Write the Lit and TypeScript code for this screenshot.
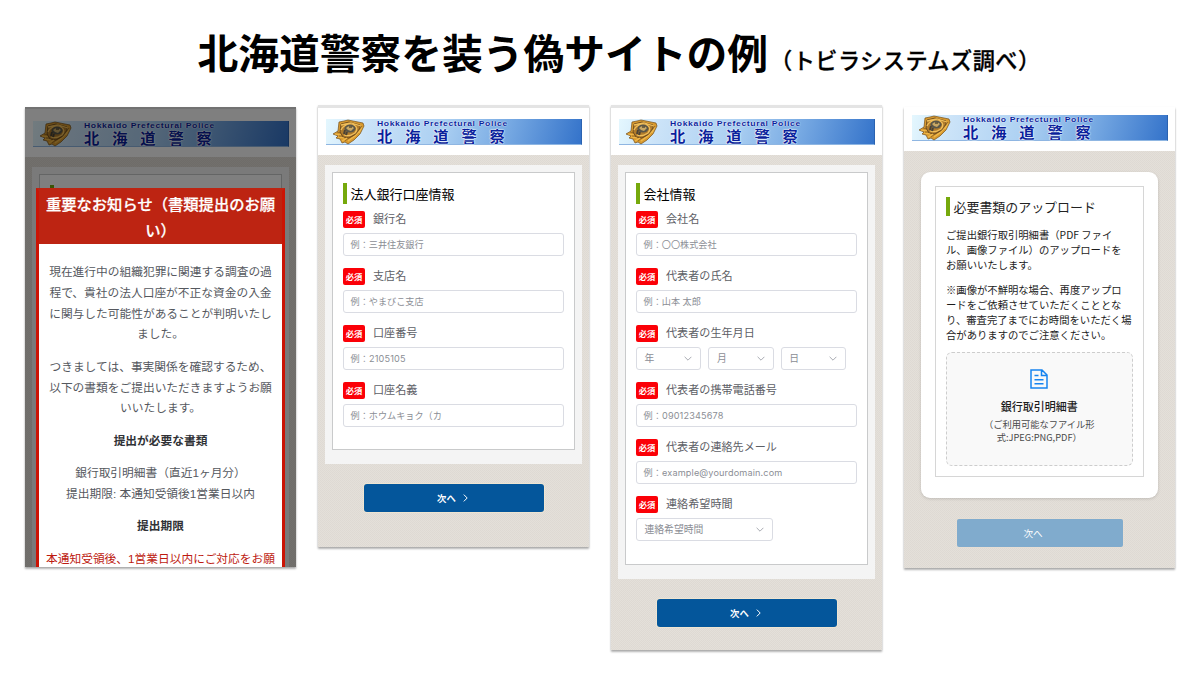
import { LitElement, html, css, svg } from "lit";
import { customElement, property } from "lit/decorators.js";
import { classMap } from "lit/directives/class-map.js";

@customElement("police-banner")
class PoliceBanner extends LitElement {
  static styles = css`
    :host {
      display: flex;
      height: 25.5px;
      width: 256px;
      box-sizing: border-box;
      background: linear-gradient(105deg, #e4f7fe 0%, #cbe3f8 16%, #acd0f2 45%, #78aae3 70%, #3473ca 100%);
      border-bottom: 1px solid #8fb6e2;
      border-right: 1px solid #2a62b0;
    }
    .emblem { width: 34px; height: 26px; margin: 0 0 0 6px; flex: none; }
    .names { margin-left: 11.5px; color: #0a1f9c; white-space: nowrap; }
    .en {
      font: bold 7.2px/8px "Liberation Sans", sans-serif;
      letter-spacing: 0.55px;
      padding-top: 0.7px;
      transform: scaleX(1.19);
      transform-origin: 0 0;
      text-shadow: 0 0 1px #fff, 0 0 1px #fff;
    }
    .ja {
      font: bold 14.3px/15px "Noto Sans CJK JP", sans-serif;
      letter-spacing: 12px;
      transform: scaleX(1.07);
      transform-origin: 0 0;
      text-shadow: 0 0 1px #fff, 0 0 1px #fff, 0 0 2px #fff;
    }
  `;
  render() {
    return html`
      <svg class="emblem" viewBox="0 0 34 26">
        <path d="M7 3 L12 2 L16 1 L31 4 L32 7 L28 15 L22 21 L16 25 L13 23 L10 24 L8 20 L4 19 L6 17 L1 15 L6 12 Z" fill="#d99a2e" stroke="#76501b" stroke-width=".7"/>
        <path d="M9 5 L17 3 L28 6 L28 9 L24 15 L17 19 L11 18 L8 13 Z" fill="#b07b2b" stroke="#5c4120" stroke-width=".8"/>
        <path d="M9 6 L19 4 L29 7 M9 11 Q12 4 22 6 Q27 9 23 14 Q17 18 12 16" fill="none" stroke="#f0bf5b" stroke-width="1.3"/>
        <ellipse cx="18" cy="9.5" rx="5.5" ry="4" fill="#595649"/>
        <path d="M14 9 Q18 5 22 9 L19 12 L16 11 Z" fill="#c8a865"/>
        <path d="M17 8 L20 8" stroke="#3b3628" stroke-width="1.2"/>
        <path d="M12 15 L13 11 M14 16 L15 13" stroke="#494236" stroke-width="2"/>
        <path d="M3 15 L9 16 M6 18 L12 19 M10 22 L15 19 M16 22 L23 17 L28 11 M30 8 L27 14" fill="none" stroke="#f0b94c" stroke-width="1.2"/>
        <path d="M5 13 L9 14 M7 17 L11 17 M13 22 L17 19 L24 15 L30 7" fill="none" stroke="#6d4a1d" stroke-width=".6"/>
      </svg>
      <div class="names">
        <div class="en">Hokkaido Prefectural Police</div>
        <div class="ja">北海道警察</div>
      </div>
    `;
  }
}

const chevronDown = svg`<path d="M0.6 0.8 L4 4.2 L7.4 0.8" fill="none" stroke="#a8abb2" stroke-width="1"/>`;

@customElement("form-field")
class FormField extends LitElement {
  @property() label = "";
  @property() hint = "";
  @property({ type: Array }) selects: string[] = [];
  static styles = css`
    :host { display: block; height: 57px; }
    .head { display: flex; align-items: center; height: 17px; }
    .req {
      width: 22px; height: 17px; border-radius: 2px; background: #fb0007; color: #fff;
      font: bold 8.3px/16px "Noto Sans CJK JP", sans-serif; text-align: center; white-space: nowrap;
    }
    .label { margin-left: 8px; color: #5d6066; font: 11.1px/15px "Noto Sans CJK JP", sans-serif; height: 17px; white-space: nowrap; }
    .box {
      display: flex; align-items: center; justify-content: space-between;
      box-sizing: border-box; height: 23px; border: 1px solid #dadce3; border-radius: 3px;
      padding: 0 7px 0 6.5px; background: #fff; color: #8b8e95;
      font: 9.15px/21px Inter, "Noto Sans CJK JP", sans-serif; white-space: nowrap;
    }
    .latin { letter-spacing: 0.14px; }
    .field { margin-top: 5px; }
    .row { display: flex; gap: 7px; margin-top: 5px; }
    .select { width: 65.4px; padding-left: 7.5px; padding-right: 8px; font-size: 9.8px; }
    .select.wide { width: 137px; }
    svg { width: 8px; height: 5px; }
  `;
  render() {
    return html`
      <div class="head"><span class="req">必須</span><span class="label">${this.label}</span></div>
      ${this.selects.length
        ? html`<div class="row">
            ${this.selects.map(
              (s) => html`<div class=${classMap({ box: true, select: true, wide: this.selects.length === 1 })}>
                <span>${s}</span><svg viewBox="0 0 8 5">${chevronDown}</svg>
              </div>`
            )}
          </div>`
        : html`<div class="box field"><span class=${classMap({ latin: /[0-9a-z]/.test(this.hint) })}>${this.hint}</span></div>`}
    `;
  }
}

@customElement("app-root")
class AppRoot extends LitElement {
  static styles = css`
    :host {
      display: block; width: 1200px; height: 680px; overflow: hidden; background: #fff;
      font-family: "Noto Sans CJK JP", sans-serif; color: #000;
    }
    .title { display: flex; align-items: baseline; height: 105px; padding-left: 197.5px; box-sizing: border-box; white-space: nowrap; }
    .title .main { font-size: 40.75px; line-height: 104px; font-weight: 700; }
    .title .sub { font-size: 22.2px; font-weight: 500; margin-left: 2px; letter-spacing: 0.45px; -webkit-text-stroke: 0.3px #000; }
    .cards { display: flex; align-items: flex-start; gap: 22px; padding-left: 25px; }
    .card {
      width: 271px; box-sizing: border-box; position: relative; overflow: hidden;
      background: #e4e0da repeating-conic-gradient(rgba(170, 160, 145, 0.1) 0 25%, transparent 0 50%) 0 0 / 2px 2px;
    }
    .shell { box-shadow: 0 2px 2px rgba(0, 0, 0, 0.25), 0 1px 2px rgba(0, 0, 0, 0.15); margin-top: 2px; }
    .shell.raised { margin-top: 0; }
    .header { background: #fff; height: 50px; padding: 11px 0 0 7.5px; box-sizing: border-box; border-top: 3px solid #e4e4e4; }
    .outer { background: #f4f4f4; margin: 10px 7px 0; padding: 7px 7px 14px; }
    .inner { box-sizing: border-box; border: 1px solid #c9cacb; background: #fff; padding: 10px 10px 0; }
    .bank .inner { height: 278px; }
    .company .inner { height: 393px; }
    h2 { display: flex; align-items: center; margin: 0 0 7px; height: 21px; font-size: 13px; line-height: 21px; font-weight: 400; white-space: nowrap; }
    h2::before { content: ""; width: 4px; height: 100%; margin-right: 3.5px; background: #76a90c; }
    .bank { height: 442px; }
    .company { height: 545px; }
    .button {
      display: flex; align-items: center; justify-content: center; gap: 7px;
      width: 180px; height: 28px; margin: 20.5px 0 0 45.5px; border-radius: 3px; background: #04569b;
      box-shadow: 0 0 0 1px #eee5d2; color: #fff; font-size: 9.4px; line-height: 26px; font-weight: 700;
      box-sizing: border-box; padding-right: 2px;
    }
    .bank .button, .company .button { margin-top: 20px; }
    .button svg { width: 5px; height: 8px; }

    .notice { height: 460px; }
    .shade { position: absolute; inset: 0; background: rgba(0, 0, 0, 0.5); }
    .notice .header { height: 50px; padding-top: 12px; border-top-width: 2px; }
    .notice .inner { height: 420px; }
    .modal {
      position: absolute; left: 11px; top: 81px; width: 249px; height: 400px; box-sizing: border-box;
      border: 3px solid #cb1405; border-top-color: #bd2412; background: #fff; text-align: center; white-space: nowrap;
    }
    .modal h3 { margin: -1px 0 0; height: 54px; background: #bd2412; color: #fff; font-size: 15.3px; line-height: 26px; font-weight: 500; -webkit-text-stroke: 0.25px #fff; }
    .modal .text { padding-top: 18px; color: #55585e; font-size: 11.73px; line-height: 20.8px; font-family: "Liberation Sans", "Noto Sans CJK JP", sans-serif; }
    .modal p { margin: 0 0 11.6px; }
    .modal strong { color: #303236; font-weight: 700; }
    .modal .red { color: #bd1a10; }

    .upload { height: 461px; }
    .upload .header { height: 44px; padding-top: 8px; border-top: 0; }
    .sheet {
      width: 236.5px; height: 326px; margin: 21px 0 0 17px; padding: 14px; box-sizing: border-box;
      background: #fff; border-radius: 9px; box-shadow: 0 1px 3px rgba(0, 0, 0, 0.15);
    }
    .sheet .inner { height: 291px; border-color: #d6d6d6; }
    .sheet h2 { height: 19px; color: #222; font-size: 12.95px; margin-bottom: 10.5px; }
    .sheet p { margin: 0 0 10px; font-size: 10.33px; line-height: 15.1px; color: #1c1c1c; white-space: nowrap; }
    .drop {
      display: flex; flex-direction: column; align-items: center; box-sizing: border-box;
      height: 114px; padding-top: 15.5px; border: 1.5px dashed #cdcdcd; border-radius: 6px; background: #f9f9f9;
      white-space: nowrap; text-align: center;
    }
    .drop svg { width: 18px; height: 20px; flex: none; }
    .drop .name { margin-top: 9.5px; font-size: 11px; line-height: 17px; font-weight: 500; color: #1c1c1c; }
    .drop .types { margin-top: 2.5px; font-size: 9.25px; line-height: 13.6px; color: #4a4a4a; }
    .button.disabled { width: 166px; background: #80abcd; margin: 20.5px 0 0 52.5px; padding-right: 13px; font-size: 9.6px; font-weight: 400; box-shadow: 0 0 0 1px #e6ded4; border-radius: 2px; }
  `;

  private next() {
    return html`<div class="button">
      <span>次へ</span>
      <svg viewBox="0 0 5 8"><path d="M0.8 0.6 L4.2 4 L0.8 7.4" fill="none" stroke="#fff" stroke-width="1" /></svg>
    </div>`;
  }

  render() {
    return html`
      <div class="title">
        <span class="main">北海道警察を装う偽サイトの例</span><span class="sub">（トビラシステムズ調べ）</span>
      </div>
      <div class="cards">
        <div class="shell">
          <div class="card notice">
            <div class="header"><police-banner></police-banner></div>
            <div class="outer"><div class="inner"><h2></h2></div></div>
            <div class="shade"></div>
            <div class="modal">
              <h3>重要なお知らせ（書類提出のお願<br />い）</h3>
              <div class="text">
                <p>現在進行中の組織犯罪に関連する調査の過<br />程で、貴社の法人口座が不正な資金の入金<br />に関与した可能性があることが判明いたし<br />ました。</p>
                <p>つきましては、事実関係を確認するため、<br />以下の書類をご提出いただきますようお願<br />いいたします。</p>
                <p><strong>提出が必要な書類</strong></p>
                <p>銀行取引明細書（直近1ヶ月分）<br />提出期限: 本通知受領後1営業日以内</p>
                <p><strong>提出期限</strong></p>
                <p class="red">本通知受領後、1営業日以内にご対応をお願</p>
              </div>
            </div>
          </div>
        </div>

        <div class="shell raised">
          <div class="card bank">
            <div class="header"><police-banner></police-banner></div>
            <div class="outer">
              <div class="inner">
                <h2>法人銀行口座情報</h2>
                <form-field label="銀行名" hint="例：三井住友銀行"></form-field>
                <form-field label="支店名" hint="例：やまびこ支店"></form-field>
                <form-field label="口座番号" hint="例：2105105"></form-field>
                <form-field label="口座名義" hint="例：ホウムキョク（カ"></form-field>
              </div>
            </div>
            ${this.next()}
          </div>
        </div>

        <div class="shell raised">
          <div class="card company">
            <div class="header"><police-banner></police-banner></div>
            <div class="outer">
              <div class="inner">
                <h2>会社情報</h2>
                <form-field label="会社名" hint="例：〇〇株式会社"></form-field>
                <form-field label="代表者の氏名" hint="例：山本 太郎"></form-field>
                <form-field label="代表者の生年月日" .selects=${["年", "月", "日"]}></form-field>
                <form-field label="代表者の携帯電話番号" hint="例：09012345678"></form-field>
                <form-field label="代表者の連絡先メール" hint="例：example@yourdomain.com"></form-field>
                <form-field label="連絡希望時間" .selects=${["連絡希望時間"]}></form-field>
              </div>
            </div>
            ${this.next()}
          </div>
        </div>

        <div class="shell">
          <div class="card upload">
            <div class="header"><police-banner></police-banner></div>
            <div class="sheet">
              <div class="inner">
                <h2>必要書類のアップロード</h2>
                <p>ご提出銀行取引明細書（PDF ファイ<br />ル、画像ファイル）のアップロードを<br />お願いいたします。</p>
                <p>※画像が不鮮明な場合、再度アップロ<br />ードをご依頼させていただくこととな<br />り、審査完了までにお時間をいただく場<br />合がありますのでご注意ください。</p>
                <div class="drop">
                  <svg viewBox="0 0 18 20" fill="none" stroke="#1784f0" stroke-width="1.5">
                    <path d="M1 1 H12 L17 6 V19 H1 Z M11.5 1 V6.5 H17 M4.5 6.5 H8.5 M4.5 10.7 H13.5 M4.5 14.8 H13.5" />
                  </svg>
                  <div class="name">銀行取引明細書</div>
                  <div class="types">（ご利用可能なフアイル形<br />式:JPEG:PNG,PDF）</div>
                </div>
              </div>
            </div>
            <div class="button disabled">次へ</div>
          </div>
        </div>
      </div>
    `;
  }
}
